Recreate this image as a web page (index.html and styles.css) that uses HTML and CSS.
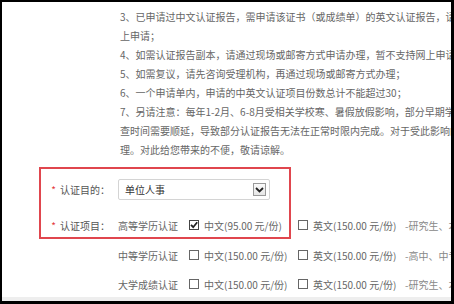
FILE: index.html
```html
<!DOCTYPE html>
<html lang="zh-CN">
<head>
<meta charset="utf-8">
<link rel="stylesheet" href="styles.css">
</head>
<body>
<div class="screen">
  <div class="page">
    <div class="notes">
      <div class="line">3、已申请过中文认证报告，需申请该证书（或成绩单）的英文认证报告，请通过网</div>
      <div class="line">上申请；</div>
      <div class="line">4、如需认证报告副本，请通过现场或邮寄方式申请办理，暂不支持网上申请；</div>
      <div class="line">5、如需复议，请先咨询受理机构，再通过现场或邮寄方式办理；</div>
      <div class="line">6、一个申请单内，申请的中英文认证项目份数总计不能超过30；</div>
      <div class="line">7、另请注意：每年1-2月、6-8月受相关学校寒、暑假放假影响，部分早期学历认证报告的核</div>
      <div class="line">查时间需要顺延，导致部分认证报告无法在正常时限内完成。对于受此影响的认证申请，我们将</div>
      <div class="line">理。对此给您带来的不便，敬请谅解。</div>
    </div>

    <div class="form">
      <div class="row row-select">
        <div class="label"><span class="req">*</span>认证目的：</div>
        <div class="select">
          <span class="select-text">单位人事</span>
          <span class="select-btn">
            <svg width="9" height="6" viewBox="0 0 9 6"><path d="M1 1 L4.5 4.5 L8 1" fill="none" stroke="#222" stroke-width="1.8"/></svg>
          </span>
        </div>
      </div>

      <div class="row row-item">
        <div class="label"><span class="req">*</span>认证项目：</div>
        <div class="name">高等学历认证</div>
        <div class="opt"><span class="cb checked"><svg width="8" height="8" viewBox="0 0 8 8"><path d="M1 3.8 L3.2 6.2 L7.2 1.2" fill="none" stroke="#222" stroke-width="1.8"/></svg></span>中文(95.00 元/份)</div>
        <div class="opt"><span class="cb"></span>英文(150.00 元/份)</div>
        <div class="desc">-研究生、本科、专科</div>
      </div>

      <div class="row row-item">
        <div class="label"></div>
        <div class="name">中等学历认证</div>
        <div class="opt"><span class="cb"></span>中文(150.00 元/份)</div>
        <div class="opt"><span class="cb"></span>英文(150.00 元/份)</div>
        <div class="desc">-高中、中专</div>
      </div>

      <div class="row row-item">
        <div class="label"></div>
        <div class="name">大学成绩认证</div>
        <div class="opt"><span class="cb"></span>中文(150.00 元/份)</div>
        <div class="opt"><span class="cb"></span>英文(150.00 元/份)</div>
        <div class="desc">-研究生、本科、专科</div>
      </div>
    </div>

    <div class="highlight"></div>
  </div>
  <div class="band"></div>
</div>
</body>
</html>
```

FILE: styles.css
```css
html, body {
  margin: 0;
  padding: 0;
  background: #000;
}
body {
  width: 454px;
  height: 304px;
  overflow: hidden;
  font-family: "Noto Sans CJK SC", "Noto Sans", sans-serif;
  font-size: 10px;
  color: #666;
}
.screen {
  margin: 2px 3px 3px 2px;
  width: 449px;
  height: 299px;
  background: #fff;
  display: flex;
  flex-direction: column;
  overflow: hidden;
}
.page {
  position: relative;
  flex: 1;
  overflow: hidden;
}
.band {
  height: 4px;
  background: #eeeeee;
}
.notes {
  padding: 5px 0 0 118px;
}
.line {
  line-height: 19px;
  height: 19px;
  white-space: nowrap;
}
.form {
  margin-top: 20px;
  display: flex;
  flex-direction: column;
}
.row {
  display: flex;
  align-items: center;
  white-space: nowrap;
}
.row-select {
  height: 21px;
}
.row-item {
  height: 20px;
  margin-top: 10px;
}
.row-item:nth-child(2) {
  margin-top: 15px;
}
.row-item:nth-child(4) {
  margin-top: 9px;
}
.label {
  width: 108px;
  padding-right: 8px;
  text-align: right;
  color: #555;
  flex: none;
}
.req {
  color: #e4393c;
  margin-right: 4px;
}
.select {
  width: 150px;
  height: 19px;
  border: 1px solid #d4d4d4;
  border-radius: 2px;
  display: flex;
  align-items: center;
  justify-content: space-between;
  padding: 0 3px 0 6px;
  box-sizing: content-box;
}
.select {
  width: 141px;
}
.select-text {
  color: #333;
}
.select-btn {
  width: 11px;
  height: 11px;
  border: 1px solid #9a9a9a;
  background: linear-gradient(#fbfbfb, #e6e6e6);
  display: flex;
  align-items: center;
  justify-content: center;
}
.name {
  width: 70px;
  flex: none;
}
.opt {
  width: 109px;
  flex: none;
  display: flex;
  align-items: center;
}
.opt + .opt {
  width: 108px;
}
.cb {
  width: 8px;
  height: 8px;
  border: 1px solid #666;
  background: #fff;
  margin: 0 5px 0 1px;
  display: flex;
  align-items: center;
  justify-content: center;
  flex: none;
}
.cb.checked {
  border-color: #444;
}
.desc {
  color: #888;
}
.highlight {
  position: absolute;
  left: 37px;
  top: 165px;
  width: 252px;
  height: 72px;
  box-sizing: border-box;
  border: 2px solid #e0464e;
  pointer-events: none;
}
```
